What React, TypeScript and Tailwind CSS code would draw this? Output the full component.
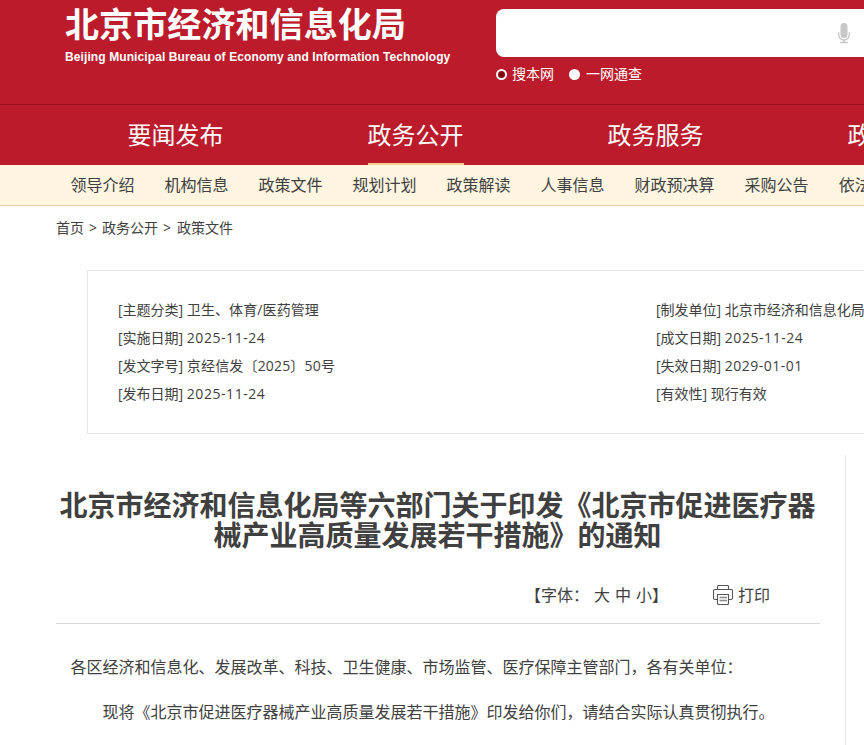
const navItems = ["要闻发布", "政务公开", "政务服务", "政民互动"];

const subItems = [
  "领导介绍", "机构信息", "政策文件", "规划计划", "政策解读",
  "人事信息", "财政预决算", "采购公告", "依法行政",
];

type Row = { label: string; value: string; style?: string };

const leftRows: Row[] = [
  { label: "主题分类", value: "卫生、体育/医药管理", style: "tracking-[0.1px]" },
  { label: "实施日期", value: "2025-11-24", style: "tracking-[0.55px]" },
  { label: "发文字号", value: "京经信发〔2025〕50号", style: "tracking-[0.17px]" },
  { label: "发布日期", value: "2025-11-24", style: "tracking-[0.55px]" },
];

const rightRows: Row[] = [
  { label: "制发单位", value: "北京市经济和信息化局" },
  { label: "成文日期", value: "2025-11-24", style: "tracking-[0.55px]" },
  { label: "失效日期", value: "2029-01-01", style: "tracking-[0.5px]" },
  { label: "有效性", value: "现行有效" },
];

function Rows({ rows }: { rows: Row[] }) {
  return (
    <ul className="w-[538px] shrink-0">
      {rows.map((r) => (
        <li key={r.label} className="h-7 leading-7">
          [{r.label}] <span className={r.style}>{r.value}</span>
        </li>
      ))}
    </ul>
  );
}

function Mic() {
  return (
    <svg width="12" height="21" viewBox="0 0 12 21" fill="none" className="shrink-0">
      <rect x="2.5" y="0" width="7" height="15" rx="3.5" fill="#c8c8c8" />
      <path d="M.7 9.5v2.3a5.3 5.2 0 0 0 10.6 0V9.5" stroke="#c8c8c8" strokeWidth="1.4" />
      <path d="M6 16.8v2.4M2 19.5h8" stroke="#c8c8c8" strokeWidth="1.5" />
    </svg>
  );
}

function Printer() {
  return (
    <svg width="20" height="20" viewBox="0 0 20 20" fill="none" stroke="#555" strokeWidth="1.1" className="shrink-0">
      <path d="M4.5 4.5V1.5a1 1 0 0 1 1-1h9a1 1 0 0 1 1 1v3" />
      <path d="M4.500 14.500h-2.500a1.500 1.500 0 0 1-1.500-1.500V6A1.500 1.500 0 0 1 2 4.500h16A1.500 1.500 0 0 1 19.500 6v7a1.500 1.500 0 0 1-1.500 1.500h-2.500" />
      <path d="M4.500 9.500h11v9a1 1 0 0 1-1 1h-9a1 1 0 0 1-1-1z" />
      <path d="M6.500 12.500h7.500M6.500 15.500h7.500" stroke="#888" strokeWidth="1.400" />
    </svg>
  );
}

export default function App() {
  return (
    <div className="h-[745px] w-full overflow-hidden bg-white font-['Open_Sans','Noto_Sans_CJK_SC',sans-serif] text-sm whitespace-nowrap text-[#404040]">
      <header className="bg-[#bc1b2c] text-white">
        <div className="flex h-[105px] border-b border-[#960f1d]">
          <div className="w-[496px] shrink-0 pl-[65px]">
            <div className="mt-[3px] h-10 font-['Noto_Sans_CJK_SC',sans-serif] text-[34px] leading-10 font-bold tracking-[0.1px]">
              北京市经济和信息化局
            </div>
            <div className="mt-[6px] font-['Liberation_Sans',sans-serif] text-xs leading-4 font-bold tracking-[0.1px]">
              Beijing Municipal Bureau of Economy and Information Technology
            </div>
          </div>
          <div className="w-[368px] shrink-0 pt-[9px]">
            <div className="flex h-12 items-center justify-end rounded-l-lg bg-white pr-[14px]">
              <Mic />
            </div>
            <div className="mt-[7px] flex h-5 items-center leading-5">
              <span className="size-[11px] rounded-full border-2 border-white bg-[#830b0b]" />
              <span className="ml-[5px]">搜本网</span>
              <span className="ml-[15px] size-[11px] rounded-full bg-white" />
              <span className="ml-[6px]">一网通查</span>
            </div>
          </div>
        </div>
        <nav className="flex h-[60px] overflow-hidden pl-[55.5px] text-2xl leading-[60px]">
          {navItems.map((t) => (
            <div key={t} className="flex w-60 shrink-0 justify-center">
              <span className={t === "政务公开" ? "h-[60px] border-b-2 border-[#fbcf93]" : "h-[60px]"}>{t}</span>
            </div>
          ))}
        </nav>
      </header>
      <nav className="flex h-[41px] gap-[30px] overflow-hidden border-b border-[#e5d2a0] bg-[#fff5e1] pl-[70.5px] text-base leading-10">
        {subItems.map((t) => (
          <span key={t} className="shrink-0">{t}</span>
        ))}
      </nav>
      <div className="flex h-[64px] gap-[5px] pt-[12px] pl-14 leading-5">
        <span>首页</span>
        <span>&gt;</span>
        <span>政务公开</span>
        <span>&gt;</span>
        <span className="pl-px">政策文件</span>
      </div>
      <section className="ml-[87px] flex h-[164px] overflow-hidden border-y border-l border-[#e6e6e6] pt-[25px] pl-[30px]">
        <Rows rows={leftRows} />
        <Rows rows={rightRows} />
      </section>
      <main className="mt-[21px] ml-14 h-[290px] w-[790px] border-r border-[#e6e6e6] pr-[25px]">
        <h1 className="pt-[35px] pr-px text-center text-[28px] leading-[30px] font-bold">
          北京市经济和信息化局等六部门关于印发《北京市促进医疗器
          <br />
          械产业高质量发展若干措施》的通知
        </h1>
        <div className="mt-[30px] flex h-[44px] justify-end border-b border-[#d9d9d9] pr-[50px] text-base leading-[30px]">
          <span className="flex">
            <span>【字体：</span>
            <span className="ml-[5px]">大</span>
            <span className="ml-[5px]">中</span>
            <span className="ml-[5px]">小】</span>
          </span>
          <span className="ml-[45px] flex h-[30px] items-center gap-[5px]">
            <Printer />
            打印
          </span>
        </div>
        <p className="mt-7 pl-[14.5px] text-base leading-[30px]">
          各区经济和信息化、发展改革、科技、卫生健康、市场监管、医疗保障主管部门，各有关单位：
        </p>
        <p className="mt-[15px] pl-[46.5px] text-base leading-[30px]">
          现将《北京市促进医疗器械产业高质量发展若干措施》印发给你们，请结合实际认真贯彻执行。
        </p>
      </main>
    </div>
  );
}
